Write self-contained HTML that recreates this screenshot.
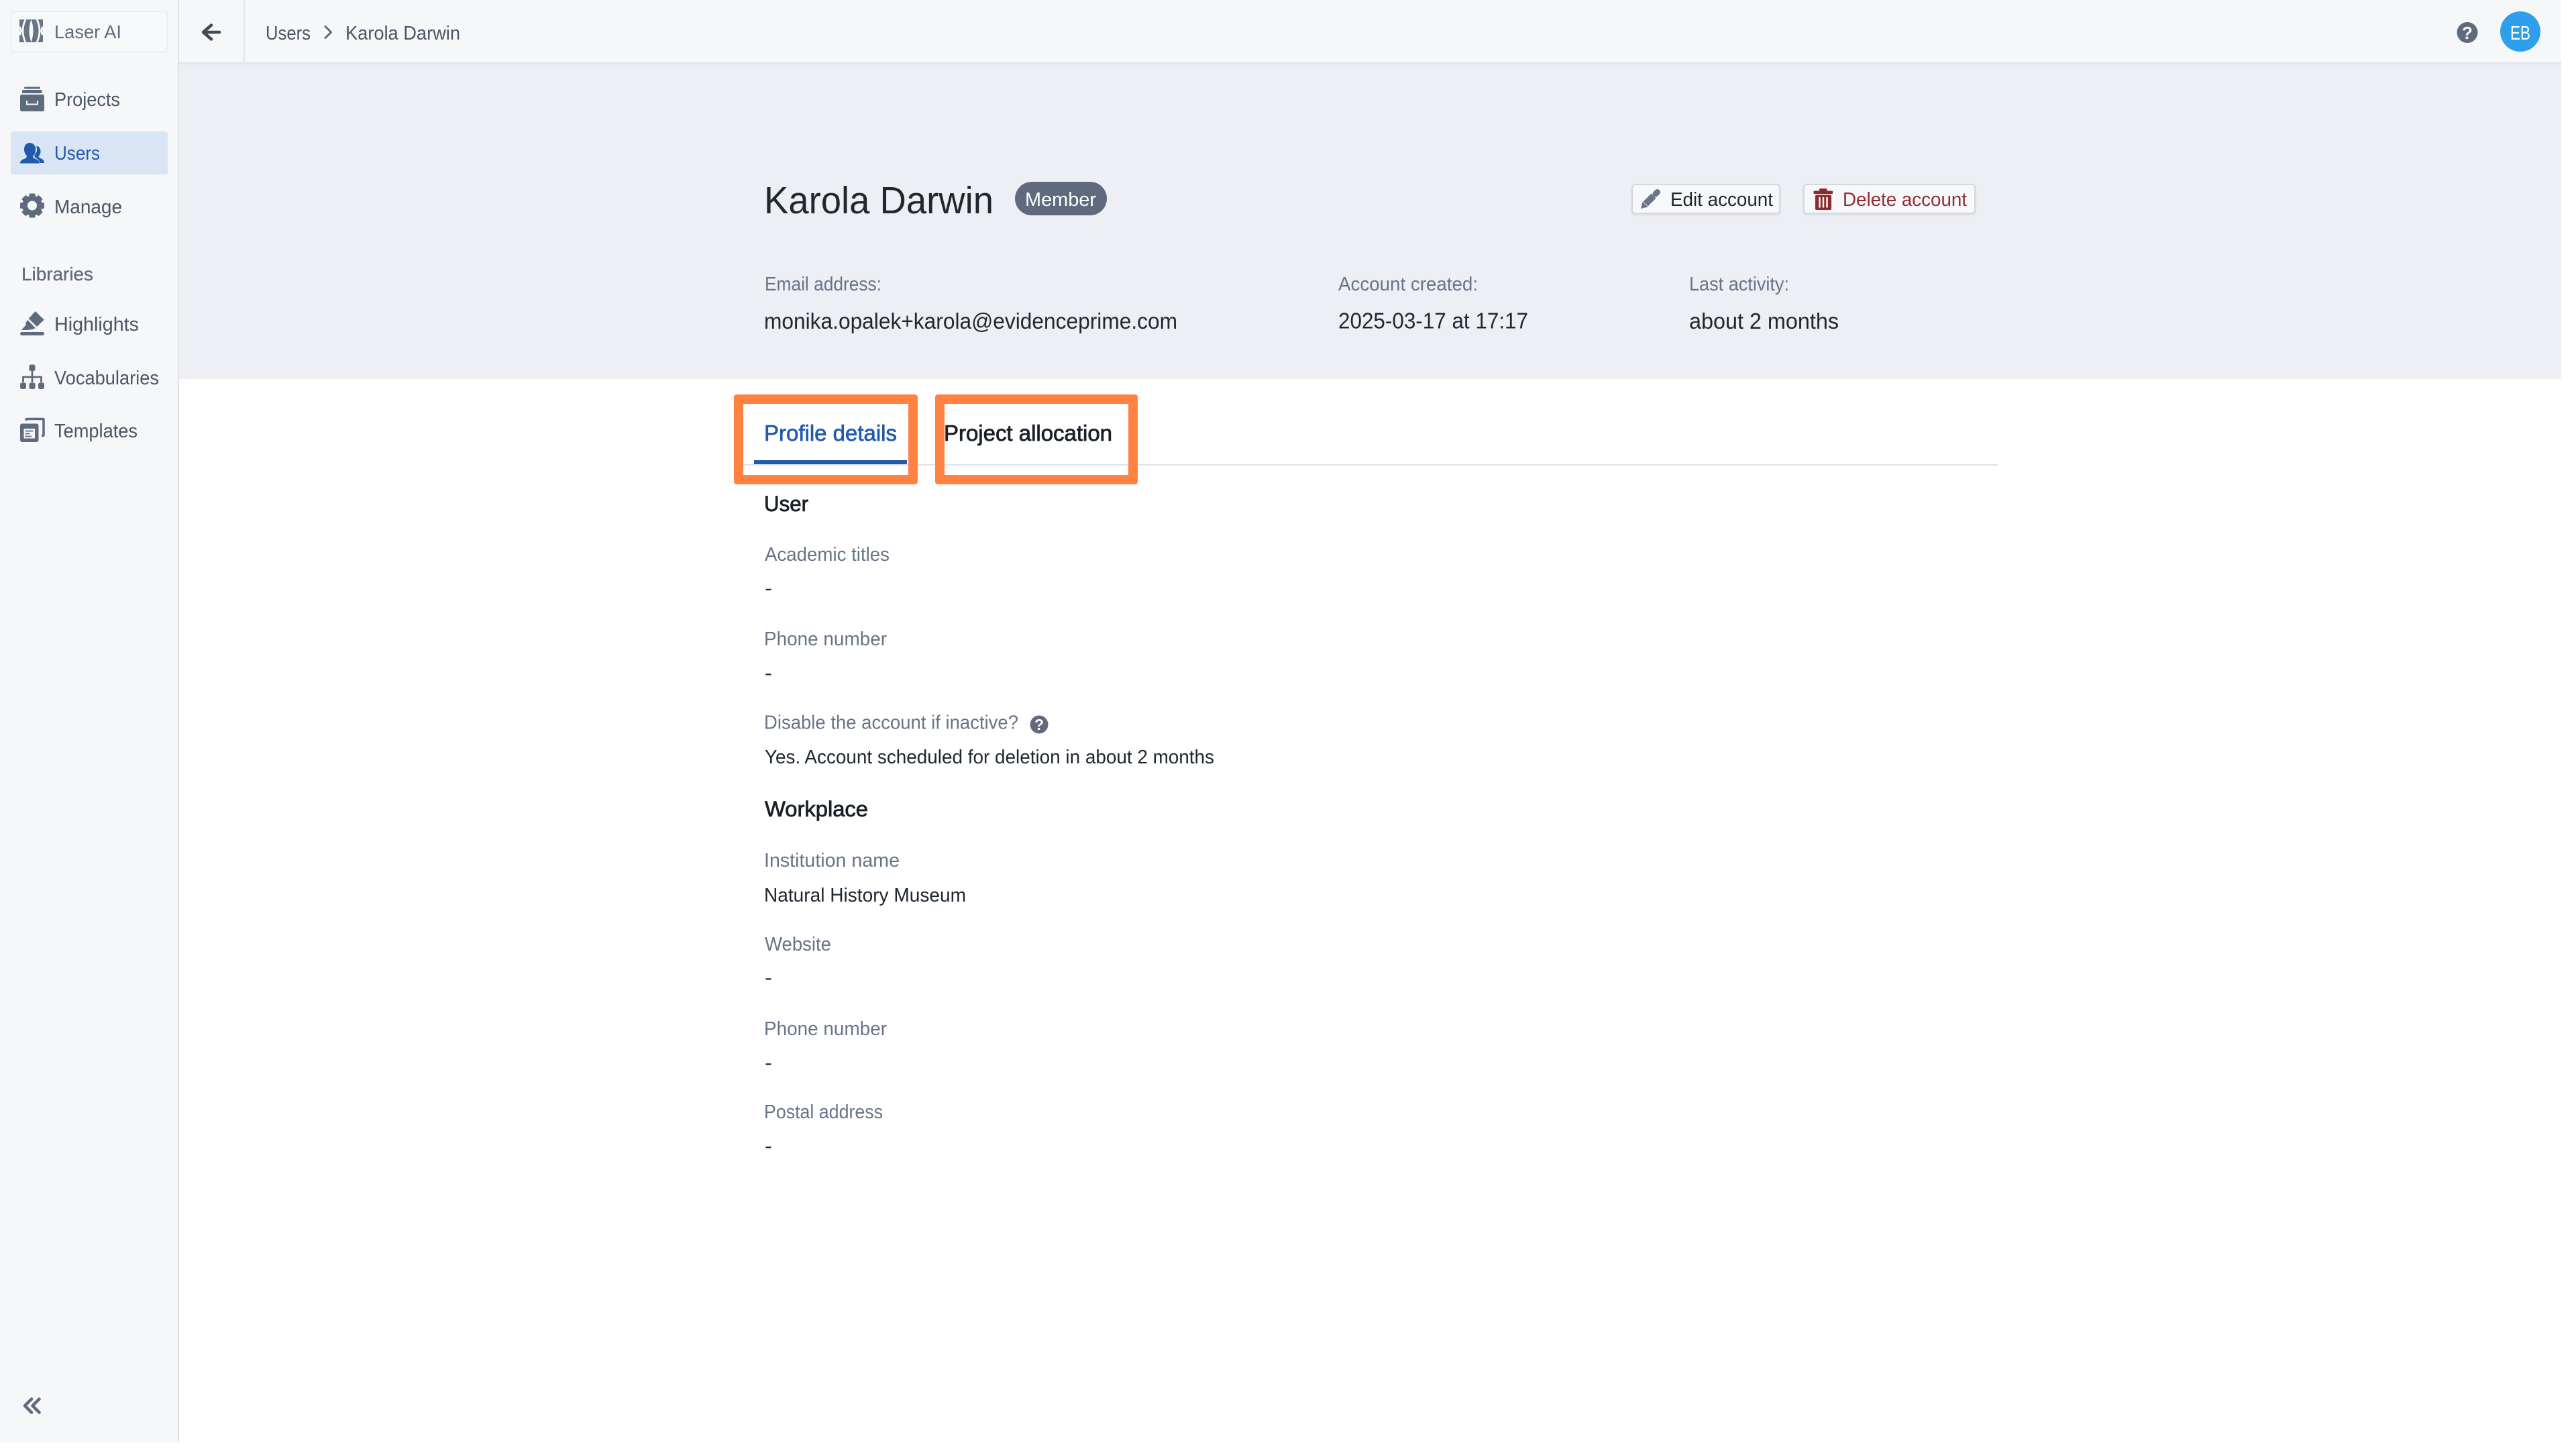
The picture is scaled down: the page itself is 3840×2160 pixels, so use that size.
<!DOCTYPE html>
<html lang="en">
<head>
<meta charset="utf-8">
<title>Karola Darwin - Laser AI</title>
<style>
html,body{margin:0;padding:0;width:3840px;height:2160px;overflow:hidden;background:#fff}
.b{position:absolute;box-sizing:border-box}
svg{position:absolute;left:0;top:0}
text{font-family:"Liberation Sans",sans-serif;font-size:29px;white-space:pre}
.nav{fill:#4a5565;font-size:29px}
.lab{fill:#677488;font-size:29px}
.val{fill:#1e2630;font-size:29px}
.big{fill:#1f2731;font-size:33px}
.h{fill:#1a2029;font-size:32px;stroke:#1a2029;stroke-width:.8px}
.ic{fill:#5f6b7c}
</style>
</head>
<body>
<!-- sidebar -->
<div class="b" style="left:0;top:0;width:267px;height:2150px;background:#f6f7f9;border-right:2px solid #dfe1e6"></div>
<div class="b" style="left:16px;top:16px;width:234px;height:62px;background:#f7f8fa;border:2px solid #eceef1;border-radius:4px"></div>
<div class="b" style="left:16px;top:196px;width:234px;height:64px;background:#d9e5f5;border-radius:4px"></div>
<!-- header -->
<div class="b" style="left:267px;top:0;width:3551px;height:96px;background:#f6f7f9;border-bottom:3px solid #e3e4ec"></div>
<div class="b" style="left:363px;top:0;width:2px;height:94px;background:#e3e4ec"></div>
<!-- account panel -->
<div class="b" style="left:267px;top:96px;width:3551px;height:469px;background:#eeeff4"></div>
<div class="b" style="left:1513px;top:271px;width:137px;height:50px;background:#5f6b7c;border-radius:25px"></div>
<div class="b" style="left:2432px;top:274px;width:222px;height:45px;background:#f6f8fa;border:2px solid #d4d7dc;border-radius:5px;box-shadow:0 2px 3px rgba(0,0,0,.08)"></div>
<div class="b" style="left:2688px;top:274px;width:257px;height:45px;background:#f6f8fa;border:2px solid #d4d7dc;border-radius:5px;box-shadow:0 2px 3px rgba(0,0,0,.08)"></div>
<!-- tabs -->
<div class="b" style="left:1100px;top:692px;width:1878px;height:2px;background:#dfe3e8"></div>
<div class="b" style="left:1124px;top:686px;width:228px;height:6px;background:#2159ac"></div>
<div class="b" style="left:1094px;top:588px;width:274px;height:134px;border:14px solid #ff8243;border-radius:4px"></div>
<div class="b" style="left:1394px;top:588px;width:302px;height:134px;border:14px solid #ff8243;border-radius:4px"></div>

<svg width="3840" height="2160" viewBox="0 0 3840 2160" xmlns="http://www.w3.org/2000/svg">
  <!-- logo -->
  <g>
    <rect x="29" y="29" width="35" height="34" fill="#687486"/>
    <path d="M46.500 29Q40.500 46 46.500 63Q52.500 46 46.500 29z" fill="#f7f8fa"/>
    <path d="M38 29Q30 46 38 63" stroke="#f7f8fa" stroke-width="2.800" fill="none"/>
    <path d="M55 29Q63 46 55 63" stroke="#f7f8fa" stroke-width="2.800" fill="none"/>
    <path d="M29 40Q33 46 29 52M64 40Q60 46 64 52" stroke="#f7f8fa" stroke-width="3" fill="none"/>
  </g>
  <text x="81" y="57" font-size="28" style="font-size:28px;fill:#5f6b7c" textLength="100" lengthAdjust="spacingAndGlyphs">Laser AI</text>

  <!-- projects icon -->
  <g class="ic">
    <rect x="36" y="129.500" width="24" height="3" rx="1.500"/>
    <rect x="33" y="134" width="29.500" height="5" rx="1"/>
    <rect x="30" y="141" width="36" height="25" rx="2.500"/>
  </g>
  <path d="M40 150v5.500h16V150" fill="none" stroke="#f6f7f9" stroke-width="2"/>
  <text class="nav" x="81" y="158" textLength="98" lengthAdjust="spacingAndGlyphs">Projects</text>

  <!-- users icon -->
  <g fill="#2159ac">
    <path d="M44 213c-5 0-8 4-8 9.500 0 5 2 8 4 10 0 2-1 3-3 4-3 1.200-7 2-7 7h29c0-4-3-5.800-7-7-2-1-3-2-3-4 3-2 4-5 4-10 0-5.500-3-9.500-9-9.500z"/>
    <path d="M55 218c3 0 5.500 3.500 5.500 8 0 3-1 5-3 7 0 1 1 2 3 3 3 1 5.500 3 5.500 7h-6c-1-4-4-6-7-8-2-1-2-3-1-5 2-2 3-4 3-6 0-2.500-.2-4.300-1-6z"/>
  </g>
  <text x="81" y="238" style="font-size:29px;fill:#2159ac" textLength="68" lengthAdjust="spacingAndGlyphs">Users</text>

  <!-- gear -->
  <g transform="translate(48 306.500)" class="ic">
    <circle r="11" fill="none" stroke="#5f6b7c" stroke-width="8"/>
    <rect x="-4.500" y="-18" width="9" height="8" rx="1.500"/>
    <rect x="-4.500" y="-18" width="9" height="8" rx="1.500" transform="rotate(45)"/>
    <rect x="-4.500" y="-18" width="9" height="8" rx="1.500" transform="rotate(90)"/>
    <rect x="-4.500" y="-18" width="9" height="8" rx="1.500" transform="rotate(135)"/>
    <rect x="-4.500" y="-18" width="9" height="8" rx="1.500" transform="rotate(180)"/>
    <rect x="-4.500" y="-18" width="9" height="8" rx="1.500" transform="rotate(225)"/>
    <rect x="-4.500" y="-18" width="9" height="8" rx="1.500" transform="rotate(270)"/>
    <rect x="-4.500" y="-18" width="9" height="8" rx="1.500" transform="rotate(315)"/>
  </g>
  <text class="nav" x="81" y="318" textLength="101" lengthAdjust="spacingAndGlyphs">Manage</text>

  <text x="32" y="418" style="font-size:28px;fill:#5f6b7c;stroke:#5f6b7c;stroke-width:.3px" textLength="107" lengthAdjust="spacingAndGlyphs">Libraries</text>

  <!-- highlights -->
  <g class="ic">
    <polygon points="52.700,464 65.700,476.700 55,487 42.700,475" />
    <polygon points="41,477 53,489 47,491.500 41,488 38,482"/>
    <polygon points="32,492 39,484 46,491.500 38,492"/>
    <rect x="30" y="495" width="36" height="5" rx="2.500"/>
  </g>
  <text class="nav" x="81" y="493" textLength="126" lengthAdjust="spacingAndGlyphs">Highlights</text>

  <!-- vocabularies -->
  <g class="ic">
    <rect x="43.500" y="543.500" width="9" height="9.500" rx="2.500"/>
    <rect x="30" y="570.500" width="9" height="9.500" rx="2.500"/>
    <rect x="43.500" y="570.500" width="9" height="9.500" rx="2.500"/>
    <rect x="57" y="570.500" width="9" height="9.500" rx="2.500"/>
    <path d="M48 553v17M34.500 570v-8h27v8" fill="none" stroke="#5f6b7c" stroke-width="2.800"/>
  </g>
  <text class="nav" x="81" y="573" textLength="156" lengthAdjust="spacingAndGlyphs">Vocabularies</text>

  <!-- templates -->
  <path d="M39 627v-1.500a1 1 0 0 1 1-1h24a1 1 0 0 1 1 1v23a1 1 0 0 1-1 1h-2" fill="none" stroke="#5f6b7c" stroke-width="3.500"/>
  <rect x="30" y="631.500" width="27.500" height="27.500" rx="3" fill="#5f6b7c"/>
  <rect x="35.500" y="639" width="16.500" height="14.500" fill="#f6f7f9"/>
  <path d="M37.500 642.500h12M37.500 646.500h7M37.500 650.500h9.500" stroke="#5f6b7c" stroke-width="1.800"/>
  <text class="nav" x="81" y="652" textLength="124" lengthAdjust="spacingAndGlyphs">Templates</text>

  <!-- collapse -->
  <path d="M47 2085.500L37 2095.500 47 2105.500M58.500 2085.500L48.500 2095.500 58.500 2105.500" fill="none" stroke="#5f6b7c" stroke-width="4.500" stroke-linecap="round" stroke-linejoin="round"/>

  <!-- header -->
  <path d="M327 48H304M315 37.500L303 48 315 58.500" fill="none" stroke="#3f4a58" stroke-width="4.500" stroke-linecap="round" stroke-linejoin="round"/>
  <text class="nav" x="396" y="59" textLength="67" lengthAdjust="spacingAndGlyphs">Users</text>
  <path d="M485 39.500L493.500 48 485 56.500" fill="none" stroke="#5f6b7c" stroke-width="3" stroke-linecap="round" stroke-linejoin="round"/>
  <text class="nav" x="515" y="59" textLength="171" lengthAdjust="spacingAndGlyphs">Karola Darwin</text>

  <circle cx="3678" cy="48.500" r="15.500" fill="#5f6b7c"/>
  <text x="3678" y="58" text-anchor="middle" style="font-size:26px;font-weight:700;fill:#f6f7f9">?</text>
  <circle cx="3757" cy="47" r="30" fill="#2e9fec"/>
  <text x="3742" y="59" style="font-size:29px;fill:#fff" textLength="30" lengthAdjust="spacingAndGlyphs">EB</text>

  <!-- account header -->
  <text x="1139" y="318" style="font-size:57px;fill:#1f2731" textLength="342" lengthAdjust="spacingAndGlyphs">Karola Darwin</text>
  <text x="1528" y="307" style="font-size:29px;fill:#fff" textLength="106" lengthAdjust="spacingAndGlyphs">Member</text>

  <path d="M2446 311l2.500-10.500 8 8z" fill="#6b7789"/>
  <path d="M2453 304l12-12" stroke="#6b7789" stroke-width="10"/>
  <path d="M2468 289l2.500-2.500" stroke="#6b7789" stroke-width="9" stroke-linecap="round"/>
  <text x="2490" y="307" style="font-size:29px;fill:#1e2630" textLength="153" lengthAdjust="spacingAndGlyphs">Edit account</text>

  <g fill="#8e2a2e">
    <rect x="2703.500" y="284.500" width="28.500" height="4.500" rx="1"/>
    <rect x="2712" y="281" width="11.500" height="5" rx="1.500"/>
    <rect x="2706" y="290.500" width="24" height="22.500" rx="2"/>
  </g>
  <path d="M2712.500 294v15.500M2718 294v15.500M2723.500 294v15.500" stroke="#f6f8fa" stroke-width="2.500"/>
  <text x="2747" y="307" style="font-size:29px;fill:#932b30" textLength="185" lengthAdjust="spacingAndGlyphs">Delete account</text>

  <text class="lab" x="1140" y="433" textLength="174" lengthAdjust="spacingAndGlyphs">Email address:</text>
  <text class="big" x="1139" y="490" textLength="616" lengthAdjust="spacingAndGlyphs">monika.opalek+karola@evidenceprime.com</text>
  <text class="lab" x="1995" y="433" textLength="208" lengthAdjust="spacingAndGlyphs">Account created:</text>
  <text class="big" x="1995" y="489.500" textLength="283" lengthAdjust="spacingAndGlyphs">2025-03-17 at 17:17</text>
  <text class="lab" x="2518" y="433" textLength="149" lengthAdjust="spacingAndGlyphs">Last activity:</text>
  <text class="big" x="2518" y="490" textLength="223" lengthAdjust="spacingAndGlyphs">about 2 months</text>

  <!-- tabs -->
  <text x="1139" y="657" style="font-size:33px;fill:#2159ac;stroke:#2159ac;stroke-width:.7px" textLength="198" lengthAdjust="spacingAndGlyphs">Profile details</text>
  <text x="1407" y="657" style="font-size:33px;fill:#1a2029;stroke:#1a2029;stroke-width:.8px" textLength="251" lengthAdjust="spacingAndGlyphs">Project allocation</text>

  <!-- details -->
  <text class="h" x="1139" y="762" textLength="66" lengthAdjust="spacingAndGlyphs">User</text>
  <text class="lab" x="1140" y="836" textLength="186" lengthAdjust="spacingAndGlyphs">Academic titles</text>
  <text class="val" x="1140" y="886.500" textLength="11" lengthAdjust="spacingAndGlyphs">-</text>
  <text class="lab" x="1139" y="962" textLength="183" lengthAdjust="spacingAndGlyphs">Phone number</text>
  <text class="val" x="1140" y="1013" textLength="11" lengthAdjust="spacingAndGlyphs">-</text>
  <text class="lab" x="1139" y="1086.500" textLength="379" lengthAdjust="spacingAndGlyphs">Disable the account if inactive?</text>
  <circle cx="1549" cy="1080" r="13.500" fill="#5f6b7c"/>
  <text x="1549" y="1088" text-anchor="middle" style="font-size:23px;font-weight:700;fill:#fff">?</text>
  <text class="val" x="1140" y="1138" textLength="670" lengthAdjust="spacingAndGlyphs">Yes. Account scheduled for deletion in about 2 months</text>

  <text class="h" x="1140" y="1217" textLength="154" lengthAdjust="spacingAndGlyphs">Workplace</text>
  <text class="lab" x="1139" y="1292" textLength="202" lengthAdjust="spacingAndGlyphs">Institution name</text>
  <text class="val" x="1139" y="1344" textLength="301" lengthAdjust="spacingAndGlyphs">Natural History Museum</text>
  <text class="lab" x="1140" y="1417" textLength="99" lengthAdjust="spacingAndGlyphs">Website</text>
  <text class="val" x="1140" y="1467" textLength="11" lengthAdjust="spacingAndGlyphs">-</text>
  <text class="lab" x="1139" y="1543" textLength="183" lengthAdjust="spacingAndGlyphs">Phone number</text>
  <text class="val" x="1140" y="1594" textLength="11" lengthAdjust="spacingAndGlyphs">-</text>
  <text class="lab" x="1139" y="1667" textLength="177" lengthAdjust="spacingAndGlyphs">Postal address</text>
  <text class="val" x="1140" y="1718" textLength="11" lengthAdjust="spacingAndGlyphs">-</text>
</svg>
</body>
</html>
